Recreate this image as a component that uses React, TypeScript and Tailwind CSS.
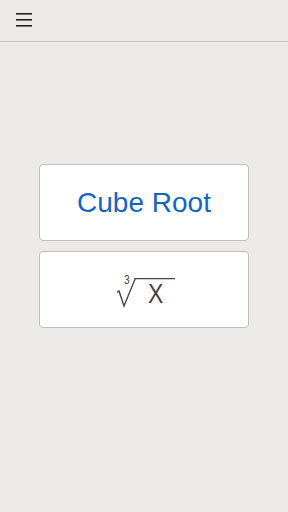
export default function App() {
  return (
    <div className="h-[512px] w-[288px] bg-[#ebeae8] font-['Liberation_Sans',Arial,sans-serif]">
      <header className="flex h-[42px] items-center border-b border-[#c9c8c6] pl-[16px]">
        <svg width="16" height="14" viewBox="0 0 16 14" className="mt-[-2px]">
          <rect x="0" y="0" width="16" height="1.6" fill="#222" />
          <rect x="0" y="6" width="16" height="1.6" fill="#222" />
          <rect x="0" y="12" width="16" height="1.6" fill="#222" />
        </svg>
      </header>

      <main className="flex flex-col items-center gap-[10px] pt-[122px]">
        <button className="flex h-[77px] w-[210px] items-center justify-center rounded-[4px] border border-[#bfbfbf] bg-white text-[28px] text-[#1565c0]">
          Cube Root
        </button>
        <button className="flex h-[77px] w-[210px] items-center justify-center rounded-[4px] border border-[#bfbfbf] bg-white text-[#454545]">
          {/* cube root of x, drawn as a small formula */}
          <span className="relative ml-[4px] mt-[4px] block h-[32px] w-[60px]">
            <svg width="60" height="32" viewBox="0 0 60 32" className="absolute left-0 top-0">
              <path d="M1 16.5 L3 15 L8 30 L19.2 2.6 H59" fill="none" stroke="#454545" strokeWidth="1.4" />
            </svg>
            <span className="absolute left-[7.5px] top-[-1.3px] origin-left scale-x-[0.85] text-[12px] leading-none">3</span>
            <span className="absolute left-[32px] top-[4.6px] origin-left scale-x-[0.82] text-[28px] leading-none">X</span>
          </span>
        </button>
      </main>
    </div>
  )
}
